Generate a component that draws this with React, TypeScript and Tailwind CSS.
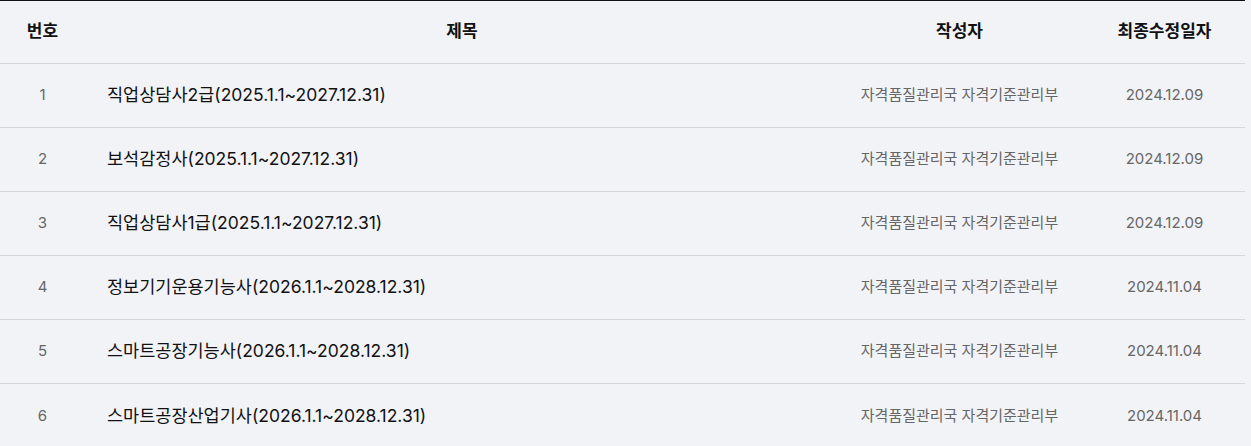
import React from "react";

const rows = [
  { no: 1, title: "직업상담사2급(2025.1.1~2027.12.31)", date: "2024.12.09" },
  { no: 2, title: "보석감정사(2025.1.1~2027.12.31)", date: "2024.12.09" },
  { no: 3, title: "직업상담사1급(2025.1.1~2027.12.31)", date: "2024.12.09" },
  { no: 4, title: "정보기기운용기능사(2026.1.1~2028.12.31)", date: "2024.11.04" },
  { no: 5, title: "스마트공장기능사(2026.1.1~2028.12.31)", date: "2024.11.04" },
  { no: 6, title: "스마트공장산업기사(2026.1.1~2028.12.31)", date: "2024.11.04" },
];

export default function App() {
  return (
    <div
      className="min-h-[446px] w-[1251px] bg-[#f2f3f7]"
      style={{ fontFamily: '"Inter", "Noto Sans CJK KR", sans-serif' }}
    >
      <table className="w-[1245px] table-fixed border-collapse border-t border-t-[#111]">
        <colgroup>
          <col className="w-[85px]" />
          <col className="w-[754px]" />
          <col className="w-[241px]" />
          <col className="w-[165px]" />
        </colgroup>
        <thead>
          <tr className="h-[63px] border-b border-[#d5d6da] text-[17px] font-bold text-[#111]">
            <th className="text-center">번호</th>
            <th className="text-center">제목</th>
            <th className="text-center">작성자</th>
            <th className="pl-[4px] text-center">최종수정일자</th>
          </tr>
        </thead>
        <tbody>
          {rows.map((r) => (
            <tr key={r.no} className="h-[64px] border-b border-[#d5d6da] last:border-b-0">
              <td className="text-center text-[15px] text-[#666]">{r.no}</td>
              <td className="pl-[22px] text-left text-[17.5px] font-normal text-[#111]">{r.title}</td>
              <td className="text-center text-[15px] text-[#666]">자격품질관리국 자격기준관리부</td>
              <td className="pl-[4px] text-center text-[15px] text-[#666]">{r.date}</td>
            </tr>
          ))}
        </tbody>
      </table>
    </div>
  );
}
